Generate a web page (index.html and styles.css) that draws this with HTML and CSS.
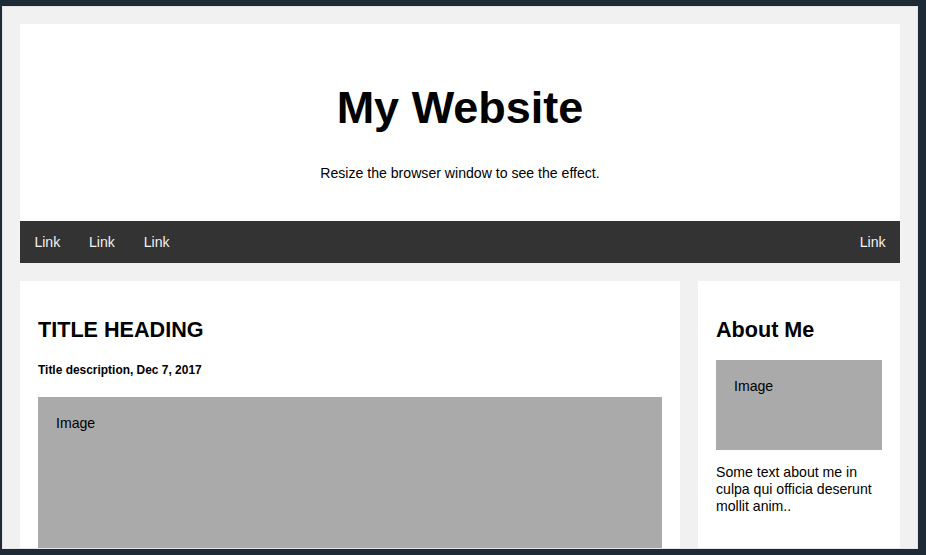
FILE: index.html
```html
<!DOCTYPE html>
<html lang="en">
<head>
<meta charset="utf-8">
<title>My Website</title>
<link rel="stylesheet" href="styles.css">
</head>
<body>
<div class="frame">
  <header class="header">
    <h1>My Website</h1>
    <p>Resize the browser window to see the effect.</p>
  </header>
  <nav class="topnav">
    <a href="#">Link</a>
    <a href="#">Link</a>
    <a href="#">Link</a>
    <a href="#" class="right">Link</a>
  </nav>
  <div class="row">
    <div class="leftcolumn">
      <div class="card">
        <h2>TITLE HEADING</h2>
        <h5>Title description, Dec 7, 2017</h5>
        <div class="fakeimg big">Image</div>
        <p>Some text..</p>
      </div>
    </div>
    <div class="rightcolumn">
      <div class="card tall">
        <h2>About Me</h2>
        <div class="fakeimg small">Image</div>
        <p>Some text about me in culpa qui officia deserunt mollit anim..</p>
      </div>
    </div>
  </div>
</div>
</body>
</html>
```
FILE: styles.css
```css
* { box-sizing: border-box; }
html, body {
  margin: 0;
  height: 555px;
  overflow: hidden;
}
body {
  background: #1f2a37;
  font-family: "Liberation Sans", Arial, sans-serif;
  font-size: 14.1px;
  line-height: 16.8px;
}
.frame {
  margin: 6px 8px 0 2px;
  height: 543px;
  border: 1px solid #e4e4e4;
  background: #f1f1f1;
  padding: 17px;
  overflow: hidden;
}
.header {
  background: #fff;
  text-align: center;
  padding: 27px;
}
.header h1 {
  font-size: 45px;
  line-height: 52px;
  margin: 30.5px 0 31px;
}
.header p {
  margin: 14.4px 0 13px;
}
.topnav {
  background: #333;
  display: flex;
}
.topnav a {
  display: block;
  color: #f2f2f2;
  padding: 12.6px 14.4px;
  text-decoration: none;
}
.topnav a.right { margin-left: auto; }
.row {
  display: flex;
  align-items: flex-start;
}
.leftcolumn { width: 75%; }
.rightcolumn { width: 25%; padding-left: 18px; }
.card {
  background: #fff;
  padding: 18px;
  margin-top: 18px;
}
.card.tall { min-height: 300px; }
.card h2 {
  font-size: 21.6px;
  line-height: 24.8px;
  margin: 18.93px 0 16.93px;
}
.card h5 {
  font-size: 11.95px;
  line-height: 13.7px;
  margin: 20.96px 0 19.5px;
}
.fakeimg {
  background: #aaa;
  width: 100%;
  padding: 18px;
}
.fakeimg.big { height: 180px; }
.fakeimg.small { height: 90px; }
.card p { margin: 14.4px 0; }
```
